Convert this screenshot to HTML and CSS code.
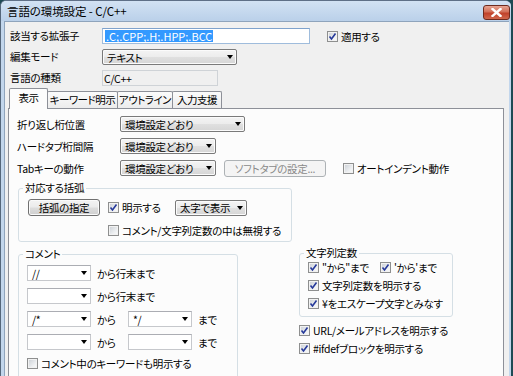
FILE: index.html
```html
<!DOCTYPE html>
<html lang="ja">
<head>
    <meta charset="UTF-8">
    <title>言語の環境設定 - C/C++</title>
    <link rel="stylesheet" href="styles.css">
</head>
<body>
    <div class="window">
        <div class="titlebar">
            <span class="title">言語の環境設定 - C/C++</span>
            <span class="close">
                <svg width="11" height="9" viewBox="0 0 11 9"><path d="M1.5 1 L9.5 8 M9.5 1 L1.5 8" stroke="#fff" stroke-width="2.4" stroke-linecap="square"/></svg>
            </span>
        </div>
        <div class="frame">
            <div class="client">
                <div class="form-top">
                    <span class="label">該当する拡張子</span>
                    <div class="field-row">
                        <div class="textbox"><span class="selected">.C;.CPP;.H;.HPP;.BCC</span></div>
                        <label class="check apply"><span class="cb on"><svg width="9" height="9" viewBox="0 0 9 9"><path d="M1.5 4.5 L3.5 7 L7.5 1.5" /></svg></span>適用する</label>
                    </div>
                    <span class="label">編集モード</span>
                    <div class="combo w135"><span>テキスト</span><i class="arrow"></i></div>
                    <span class="label">言語の種類</span>
                    <div class="readonly">C/C++</div>
                </div>

                <div class="tabs">
                    <div class="tab active t1">表示</div>
                    <div class="tab t2">キーワード明示</div>
                    <div class="tab t3">アウトライン</div>
                    <div class="tab t4">入力支援</div>
                </div>

                <div class="panel">
                    <div class="prow">
                        <span class="plabel">折り返し桁位置</span>
                        <div class="combo w125"><span>環境設定どおり</span><i class="arrow"></i></div>
                    </div>
                    <div class="prow">
                        <span class="plabel">ハードタブ桁間隔</span>
                        <div class="combo w96"><span>環境設定どおり</span><i class="arrow"></i></div>
                    </div>
                    <div class="prow">
                        <span class="plabel">Tabキーの動作</span>
                        <div class="combo w96"><span>環境設定どおり</span><i class="arrow"></i></div>
                        <div class="btn disabled soft">ソフトタブの設定...</div>
                        <label class="check autoindent"><span class="cb"></span>オートインデント動作</label>
                    </div>

                    <fieldset class="group brace">
                        <legend>対応する括弧</legend>
                        <div class="brace-grid">
                            <div class="btn">括弧の指定</div>
                            <div class="brace-opts">
                                <label class="check"><span class="cb on"><svg width="9" height="9" viewBox="0 0 9 9"><path d="M1.5 4.5 L3.5 7 L7.5 1.5" /></svg></span>明示する</label>
                                <div class="combo w72"><span>太字で表示</span><i class="arrow"></i></div>
                            </div>
                            <label class="check ignore"><span class="cb"></span>コメント/文字列定数の中は無視する</label>
                        </div>
                    </fieldset>

                    <div class="lower">
                        <fieldset class="group comment">
                            <legend>コメント</legend>
                            <div class="comment-grid">
                                <div class="ecombo"><span>//</span><i class="arrow"></i></div>
                                <span class="ctext wide">から行末まで</span>

                                <div class="ecombo"><span></span><i class="arrow"></i></div>
                                <span class="ctext wide">から行末まで</span>

                                <div class="ecombo"><span>/*</span><i class="arrow"></i></div>
                                <span class="ctext">から</span>
                                <div class="ecombo"><span>*/</span><i class="arrow"></i></div>
                                <span class="ctext">まで</span>

                                <div class="ecombo"><span></span><i class="arrow"></i></div>
                                <span class="ctext">から</span>
                                <div class="ecombo"><span></span><i class="arrow"></i></div>
                                <span class="ctext">まで</span>
                            </div>
                            <label class="check kw"><span class="cb"></span>コメント中のキーワードも明示する</label>
                        </fieldset>

                        <div class="right-col">
                            <fieldset class="group string">
                                <legend>文字列定数</legend>
                                <div class="quote-row">
                                    <label class="check"><span class="cb on"><svg width="9" height="9" viewBox="0 0 9 9"><path d="M1.5 4.5 L3.5 7 L7.5 1.5" /></svg></span>&quot;から&quot;まで</label>
                                    <label class="check"><span class="cb on"><svg width="9" height="9" viewBox="0 0 9 9"><path d="M1.5 4.5 L3.5 7 L7.5 1.5" /></svg></span>'から'まで</label>
                                </div>
                                <label class="check"><span class="cb on"><svg width="9" height="9" viewBox="0 0 9 9"><path d="M1.5 4.5 L3.5 7 L7.5 1.5" /></svg></span>文字列定数を明示する</label>
                                <label class="check"><span class="cb on"><svg width="9" height="9" viewBox="0 0 9 9"><path d="M1.5 4.5 L3.5 7 L7.5 1.5" /></svg></span>¥をエスケープ文字とみなす</label>
                            </fieldset>
                            <label class="check url"><span class="cb on"><svg width="9" height="9" viewBox="0 0 9 9"><path d="M1.5 4.5 L3.5 7 L7.5 1.5" /></svg></span>URL/メールアドレスを明示する</label>
                            <label class="check"><span class="cb on"><svg width="9" height="9" viewBox="0 0 9 9"><path d="M1.5 4.5 L3.5 7 L7.5 1.5" /></svg></span>#ifdefブロックを明示する</label>
                        </div>
                    </div>
                </div>
            </div>
        </div>
    </div>
</body>
</html>
```

FILE: styles.css
```css
html, body {
    margin: 0;
    padding: 0;
    overflow: hidden;
}

body {
    width: 513px;
    height: 376px;
    background-color: #1e4a54;
    font-family: "Noto Sans CJK JP", sans-serif;
    font-size: 10.5px;
    letter-spacing: -0.3px;
    line-height: 13px;
    font-feature-settings: "palt";
    color: #000;
}

.window {
    width: 511px;
    height: 376px;
    display: flex;
    flex-direction: column;
    box-sizing: border-box;
    border-left: 1px solid #55677b;
    border-top: 1px solid #5f7087;
    border-radius: 6px 6px 0 0;
    background-color: #c2d6ec;
    overflow: hidden;
}

.titlebar {
    height: 20px;
    flex: none;
    display: flex;
    align-items: center;
    padding-left: 6px;
    background: linear-gradient(#d2e2f3, #bad0e9);
}

.title {
    font-size: 11.5px;
    letter-spacing: -0.1px;
}

.close {
    margin-left: auto;
    margin-right: 1px;
    margin-top: 3px;
    width: 27px;
    height: 15px;
    box-sizing: border-box;
    display: flex;
    align-items: center;
    justify-content: center;
    border: 1px solid #6e2a1e;
    border-radius: 3px;
    background: linear-gradient(#e8a593, #d26f58 45%, #c0412a 55%, #d0674c);
}

.frame {
    flex: 1;
    display: flex;
    padding: 0 2px 0 3px;
}

.client {
    flex: 1;
    display: flex;
    flex-direction: column;
    background-color: #f0f0f0;
    border-left: 1px solid #8fa4bc;
    border-top: 1px solid #8fa4bc;
}

/* top rows */
.form-top {
    display: grid;
    grid-template-columns: 92px auto;
    row-gap: 5px;
    padding: 6px 0 0 5px;
    align-items: center;
}

.label {
    height: 16px;
    line-height: 16px;
}

.field-row {
    display: flex;
    align-items: center;
}

.textbox {
    width: 208px;
    height: 16px;
    box-sizing: border-box;
    border: 1px solid #9fbcdc;
    border-top-color: #7fa2cc;
    background: #fff;
    padding: 1px 0 0 2px;
}

.selected {
    display: inline-block;
    height: 12px;
    line-height: 12px;
    padding: 0 1px;
    background-color: #3399ff;
    color: #fff;
    font-size: 11px;
    letter-spacing: 0;
    vertical-align: top;
}

.check {
    display: flex;
    align-items: center;
    gap: 3px;
    height: 13px;
    white-space: nowrap;
}

.apply {
    margin-left: 17px;
}

.cb {
    width: 11px;
    height: 11px;
    box-sizing: border-box;
    flex: none;
    display: flex;
    align-items: center;
    justify-content: center;
    border: 1px solid #8e8f8f;
    background: linear-gradient(135deg, #c9ced4, #eef0f2 65%, #fbfbfb);
    box-shadow: inset 0 0 0 1px #f2f2f2;
}

.cb svg path {
    fill: none;
    stroke: #26399a;
    stroke-width: 1.6;
}

.combo {
    height: 16px;
    box-sizing: border-box;
    display: flex;
    align-items: center;
    justify-content: space-between;
    padding: 0 3px 0 4px;
    border: 1px solid #7a7a7a;
    border-radius: 2px;
    background: linear-gradient(#f4f4f4, #ececec 50%, #e0e0e0 50%, #d6d6d6);
    box-shadow: inset 0 0 0 1px #fbfbfb;
    white-space: nowrap;
}

.w135 { width: 135px; }
.w125 { width: 125px; }
.w96 { width: 96px; }
.w72 { width: 72px; }

.arrow {
    width: 0;
    height: 0;
    border-left: 3.5px solid transparent;
    border-right: 3.5px solid transparent;
    border-top: 4px solid #000;
    flex: none;
}

.readonly {
    width: 116px;
    height: 16px;
    box-sizing: border-box;
    border: 1px solid #cfd3d7;
    background-color: #f0f0f0;
    padding: 1px 0 0 1px;
}

/* tabs */
.tabs {
    display: flex;
    align-items: flex-end;
    height: 20px;
    margin: 2px 0 0 4px;
    position: relative;
    z-index: 1;
}

.tab {
    height: 17px;
    box-sizing: border-box;
    border: 1px solid #8d9098;
    border-bottom: none;
    border-radius: 2px 2px 0 0;
    background: linear-gradient(#fbfbfb, #ececec);
    text-align: center;
    line-height: 15px;
    white-space: nowrap;
    letter-spacing: -0.5px;
}

.tab + .tab {
    margin-left: -1px;
}

.tab.active {
    height: 21px;
    margin-bottom: -1px;
    background: #fcfcfc;
    line-height: 18px;
}

.t1 { width: 39px; }
.t2 { width: 71px; }
.t3 { width: 56px; }
.t4 { width: 50px; }

.panel {
    flex: 1;
    margin: 0 5px 0 3px;
    border: 1px solid #8d9098;
    border-bottom: none;
    background-color: #fcfcfc;
    padding: 7px 0 0 8px;
}

.prow {
    display: flex;
    align-items: center;
    height: 16px;
    margin-bottom: 6px;
}

.plabel {
    width: 103px;
    flex: none;
}

.btn {
    height: 17px;
    box-sizing: border-box;
    display: flex;
    align-items: center;
    justify-content: center;
    border: 1px solid #707070;
    border-radius: 3px;
    background: linear-gradient(#f3f3f3, #ebebeb 48%, #dddddd 52%, #cfcfcf);
    box-shadow: inset 0 0 0 1px #fafafa;
    white-space: nowrap;
}

.btn.disabled {
    border-color: #adb2b5;
    background: #f4f4f4;
    box-shadow: none;
    color: #8a8a8a;
}

.soft {
    width: 102px;
    margin-left: 8px;
}

.autoindent {
    margin-left: 17px;
}

/* group boxes */
.group {
    margin: 0;
    padding: 0;
    border: 1px solid #d5dfe5;
    border-radius: 3px;
    min-inline-size: auto;
}

.group legend {
    padding: 0 2px;
    line-height: 12px;
}

.brace {
    width: 274px;
    box-sizing: border-box;
    margin: 5px 0 0 1px;
    padding: 5px 0 4px 9px;
}

.brace legend {
    margin-left: -5px;
}

.brace-grid {
    display: grid;
    grid-template-columns: 72px auto;
    column-gap: 8px;
    row-gap: 8px;
    align-items: center;
}

.brace-opts {
    display: grid;
    grid-template-columns: 67px 72px;
    align-items: center;
    height: 17px;
}

.ignore {
    grid-column: 2;
}

.lower {
    display: flex;
    align-items: flex-start;
    margin-top: 5px;
}

.comment {
    width: 220px;
    box-sizing: border-box;
    margin: 1px 0 0 1px;
    padding: 5px 0 10px 8px;
}

.comment legend {
    margin-left: -4px;
}

.comment-grid {
    display: grid;
    grid-template-columns: 64px 37px 64px auto;
    row-gap: 7px;
    align-items: center;
}

.ecombo {
    height: 16px;
    box-sizing: border-box;
    display: flex;
    align-items: center;
    justify-content: space-between;
    padding: 0 3px 0 4px;
    border: 1px solid #c6c8cc;
    border-top-color: #abadb3;
    background: #fff;
}

.ctext {
    padding-left: 6px;
    white-space: nowrap;
}

.ctext.wide {
    grid-column: 2 / span 3;
}

.kw {
    margin-top: 7px;
}

.right-col {
    margin-left: 61px;
    display: flex;
    flex-direction: column;
    gap: 5px;
}

.string {
    width: 154px;
    box-sizing: border-box;
    padding: 2px 0 6px 8px;
    display: flex;
    flex-direction: column;
    gap: 5px;
}

.string legend {
    margin-left: -4px;
}

.quote-row {
    display: grid;
    grid-template-columns: 72px auto;
}

.url {
    margin-top: 2px;
}
```
